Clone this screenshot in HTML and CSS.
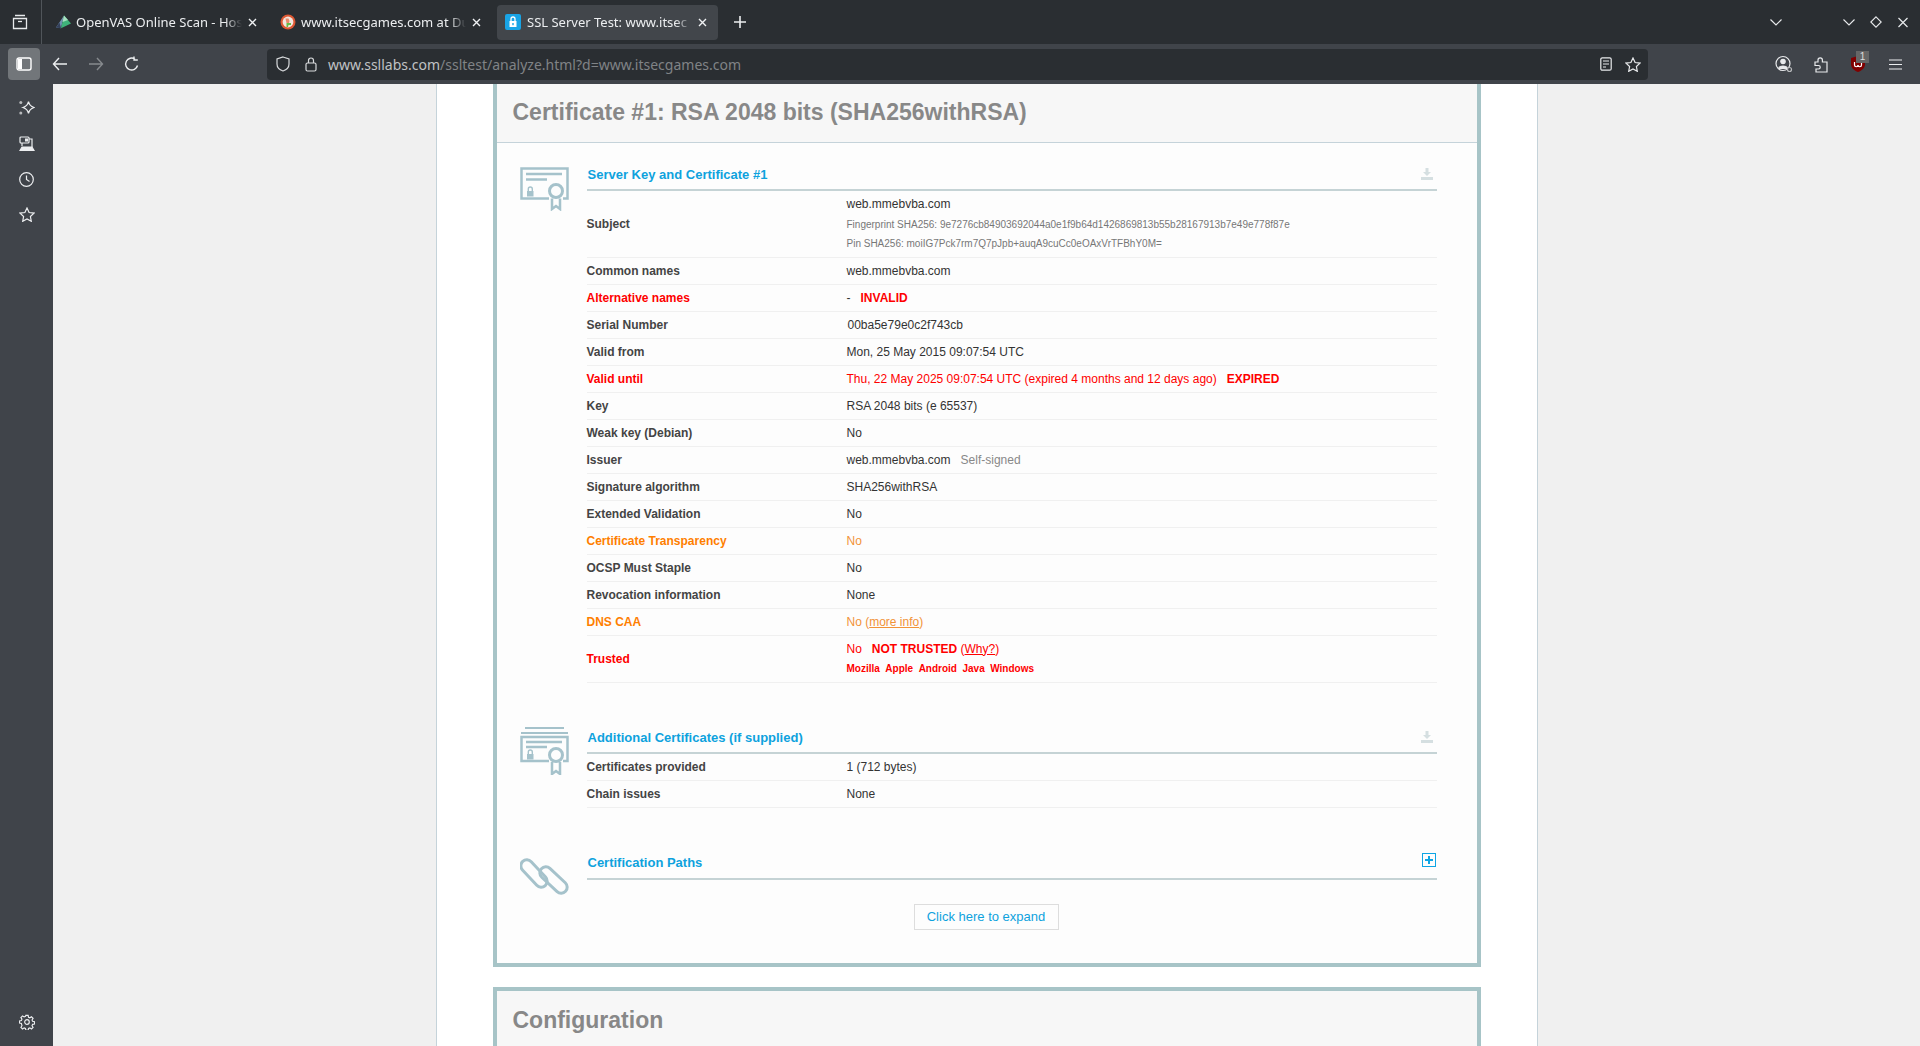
FILE: index.html
```html
<!DOCTYPE html>
<html lang="en">
<head>
    <meta charset="UTF-8">
    <title>SSL Server Test: www.itsecgames.com</title>
    <link rel="stylesheet" href="styles.css">
</head>
<body>
<div class="window">
    <!-- tabs -->
    <div class="tabbar">
        <div class="tabs-menu">
            <svg width="16" height="16" viewBox="0 0 16 16" fill="none" stroke="#e8eaec" stroke-width="1.3"><path d="M3 1.500h10M1.500 4.500h13v10h-13z"/><path d="M6 7.500h4"/></svg>
        </div>
        <div class="tab">
            <svg class="favicon" width="16" height="16" viewBox="0 0 16 16"><path d="M9 1.500 1 13.500l5 .8z" fill="#6f8fb0"/><path d="M9 1.500 6 14.300 16 9.500z" fill="#3fb37a"/><path d="M9 1.500 7.500 8 13 6z" fill="#a8e0c0"/><path d="M1 13.500 4.500 8.500 6 14.300z" fill="#34405a"/></svg>
            <span class="tab-title">OpenVAS Online Scan - Hos</span>
            <svg class="tab-close" width="9" height="9" viewBox="0 0 9 9" stroke="#f0f2f4" stroke-width="1.400"><path d="M1 1l7 7M8 1 1 8"/></svg>
        </div>
        <div class="tab tab-second">
            <svg class="favicon" width="16" height="16" viewBox="0 0 16 16"><circle cx="8" cy="8" r="7.500" fill="#de5833"/><circle cx="8" cy="8" r="5.400" fill="#f3e6de"/><path d="M5.500 4.500h3l1 2.500-.5 2H6.500z" fill="#e98a6c"/><path d="M6.500 9H11v2H8.500l-.5 2H6.500z" fill="#65bc46"/></svg>
            <span class="tab-title">www.itsecgames.com at Du</span>
            <svg class="tab-close" width="9" height="9" viewBox="0 0 9 9" stroke="#f0f2f4" stroke-width="1.400"><path d="M1 1l7 7M8 1 1 8"/></svg>
        </div>
        <div class="tab active">
            <svg class="favicon" width="16" height="16" viewBox="0 0 16 16"><rect width="16" height="16" rx="2" fill="#18a4e6"/><path d="M4.500 7h7v6h-7z" fill="#fff"/><path d="M6 7V5a2 2 0 0 1 4 0v2" fill="none" stroke="#fff" stroke-width="1.300"/><rect x="7.300" y="9" width="1.400" height="2.200" fill="#18a4e6"/></svg>
            <span class="tab-title">SSL Server Test: www.itsec</span>
            <svg class="tab-close" width="9" height="9" viewBox="0 0 9 9" stroke="#f0f2f4" stroke-width="1.400"><path d="M1 1l7 7M8 1 1 8"/></svg>
        </div>
        <svg class="new-tab" width="14" height="14" viewBox="0 0 14 14" stroke="#eceef0" stroke-width="1.600"><path d="M7 1v12M1 7h12"/></svg>
        <div class="tabbar-right">
            <svg class="tab-list" width="12" height="7" viewBox="0 0 12 7" fill="none" stroke="#e8eaec" stroke-width="1.200"><path d="M.5.500 6 6 11.500.500"/></svg>
            <div class="win-controls">
                <svg width="12" height="7" viewBox="0 0 12 7" fill="none" stroke="#e8eaec" stroke-width="1.100"><path d="M.5.500 6 6 11.500.500"/></svg>
                <svg width="12" height="12" viewBox="0 0 12 12" fill="none" stroke="#e8eaec" stroke-width="1.100"><path d="M6 .800 11.200 6 6 11.200.800 6z"/></svg>
                <svg width="12" height="11" viewBox="0 0 12 11" fill="none" stroke="#e8eaec" stroke-width="1.200"><path d="M1.500 1l9 9M10.500 1l-9 9"/></svg>
            </div>
        </div>
    </div>

    <!-- toolbar -->
    <div class="toolbar">
        <div class="sidebar-btn">
            <svg width="16" height="14" viewBox="0 0 16 14" fill="none" stroke="#fff" stroke-width="1.400"><rect x="1" y="1" width="14" height="12" rx="2"/><rect x="2" y="2" width="4" height="10" fill="#fff" stroke="none"/></svg>
        </div>
        <svg class="nav-btn" width="16" height="14" viewBox="0 0 16 14" fill="none" stroke="#eceef0" stroke-width="1.400"><path d="M7 1 1.500 7 7 13M2 7h13"/></svg>
        <svg class="nav-btn" width="16" height="14" viewBox="0 0 16 14" fill="none" stroke="#868a8e" stroke-width="1.400"><path d="M9 1l5.500 6L9 13M14 7H1"/></svg>
        <svg class="nav-btn" width="16" height="16" viewBox="0 0 16 16" fill="none" stroke="#eceef0" stroke-width="1.400"><path d="M13.500 9.500A6 6 0 1 1 11 3M10 .500V4h3.800"/></svg>
        <div class="urlbar">
            <svg class="url-icon" width="14" height="16" viewBox="0 0 14 16" fill="none" stroke="#d8dadc" stroke-width="1.200"><path d="M7 1l6 2v5c0 3.500-3 6-6 7-3-1-6-3.500-6-7V3z"/></svg>
            <svg class="url-icon lock" width="12" height="15" viewBox="0 0 12 15" fill="none" stroke="#d8dadc" stroke-width="1.200"><rect x="1" y="6" width="10" height="8" rx="1.500"/><path d="M3.500 6V3.500a2.500 2.500 0 0 1 5 0V6"/></svg>
            <span class="url-text"><span class="url-host">www.ssllabs.com</span>/ssltest/analyze.html?d=www.itsecgames.com</span>
            <div class="url-right">
                <svg width="12" height="14" viewBox="0 0 12 14" fill="none" stroke="#e8eaec" stroke-width="1.200"><rect x=".8" y=".8" width="10.400" height="12.400" rx="1.500"/><path d="M3 4h6M3 7h6M3 10h3"/></svg>
                <svg width="16" height="15" viewBox="0 0 16 15" fill="none" stroke="#e8eaec" stroke-width="1.200"><path d="M8 1l2.100 4.500 4.900.6-3.600 3.400.9 4.800L8 11.900l-4.300 2.400.9-4.800L1 6.100l4.900-.6z"/></svg>
            </div>
        </div>
        <div class="toolbar-right">
            <div class="tool-slot">
                <svg width="18" height="18" viewBox="0 0 18 18" fill="none" stroke="#e8eaec" stroke-width="1.200"><circle cx="8" cy="8.500" r="7"/><circle cx="8" cy="6.500" r="2.200" fill="#e8eaec"/><path d="M4 12.500c1-2 7-2 8 0v1H4z" fill="#e8eaec"/><circle cx="14.500" cy="14.500" r="2" fill="#40444a" stroke="#b8babc"/></svg>
            </div>
            <div class="tool-slot">
                <svg width="14" height="18" viewBox="0 0 14 18" fill="none" stroke="#e8eaec" stroke-width="1.200"><path d="M1 7h3V5a2.200 2.200 0 0 1 4.400 0v2H13v10H2v-3h2.500a1.700 1.700 0 0 0 0-3.500H1z"/></svg>
            </div>
            <div class="tool-slot ublock">
                <svg width="14" height="16" viewBox="0 0 14 16"><path d="M0 2l7-2 7 2v6c0 4-3 6.500-7 8-4-1.500-7-4-7-8z" fill="#800000"/><path d="M3.500 6v3a1.500 1.500 0 0 0 3.500 0 1.500 1.500 0 0 0 3.500 0V6" fill="none" stroke="#fff" stroke-width="1.200"/></svg>
                <span class="ublock-badge">1</span>
            </div>
            <div class="tool-slot">
                <svg width="13" height="11" viewBox="0 0 13 11" stroke="#eceef0" stroke-width="1.200"><path d="M0 1h13M0 5.500h13M0 10h13"/></svg>
            </div>
        </div>
    </div>

    <div class="main">
        <!-- sidebar -->
        <div class="sidebar">
            <div class="sidebar-top">
                <svg width="16" height="16" viewBox="0 0 16 16" fill="none" stroke="#eceef0" stroke-width="1.300"><path d="M9.500 1.500c.6 3.300 2 4.800 5.500 6-3.500 1.200-4.900 2.700-5.500 6-.6-3.300-2-4.800-5.500-6 3.500-1.200 4.900-2.700 5.500-6z"/><circle cx="1.800" cy="2.500" r="1.500" fill="#b8babc" stroke="none"/><circle cx="1.800" cy="13" r="1.500" fill="#b8babc" stroke="none"/></svg>
                <svg width="16" height="16" viewBox="0 0 16 16" fill="none" stroke="#eceef0" stroke-width="1.200"><rect x="1" y="1" width="9" height="6" rx="1"/><rect x="6" y="2.500" width="3" height="3" fill="#eceef0" stroke="none"/><path d="M10 3h3v5M3 7v3M13 8v3"/><path d="M1 14.500 3 11h10l2 3.500z" fill="#eceef0"/></svg>
                <svg width="15" height="15" viewBox="0 0 15 15" fill="none" stroke="#eceef0" stroke-width="1.200"><circle cx="7.500" cy="7.500" r="6.800"/><path d="M7.500 3.500v4l3 2"/></svg>
                <svg width="16" height="15" viewBox="0 0 16 15" fill="none" stroke="#eceef0" stroke-width="1.200"><path d="M8 1l2.100 4.500 4.900.6-3.600 3.400.9 4.800L8 11.900l-4.300 2.400.9-4.800L1 6.100l4.900-.6z"/></svg>
            </div>
            <svg width="16" height="16" viewBox="0 0 16 16" fill="none" stroke="#eceef0" stroke-width="1.200"><circle cx="8" cy="8" r="2.300"/><path d="M6.800 1h2.400l.4 2 1.400.6 1.700-1.100 1.700 1.700-1.100 1.700.6 1.400 2 .4v2.400l-2 .4-.6 1.400 1.100 1.700-1.700 1.700-1.700-1.100-1.400.6-.4 2H6.800l-.4-2-1.400-.6-1.700 1.100-1.700-1.700 1.100-1.700L2.100 9.600l-2-.4V6.800l2-.4.6-1.400L1.600 3.300l1.700-1.700L5 2.700l1.400-.6z" transform="translate(.4 .4) scale(.95)"/></svg>
        </div>

        <!-- page -->
        <div class="page">
            <div class="page-col">
                <div class="panel panel-first">
                    <div class="panel-header"><h2>Certificate #1: RSA 2048 bits (SHA256withRSA)</h2></div>

                    <div class="section section-first">
                        <svg class="section-icon" width="49" height="44" viewBox="0 0 49 44" fill="none" stroke="#a5c2cb" stroke-width="2.500">
                            <path d="M29 31.500H1.500V1.500h46v30H43"/>
                            <path d="M6 7h36M6 12.500h21" stroke-width="2.600"/>
                            <rect x="7" y="24" width="6.500" height="5.500" fill="#a5c2cb" stroke="none"/>
                            <path d="M8.300 24v-2a2 2 0 0 1 4 0v2" stroke-width="1.400"/>
                            <circle cx="36" cy="24" r="6.500" stroke-width="3"/>
                            <path d="M32 31.500v10.500l4-3 4 3V31.500"/>
                        </svg>
                        <div class="section-body">
                            <div class="section-title">
                                <h3>Server Key and Certificate #1</h3>
                                <svg class="download" width="12" height="12" viewBox="0 0 12 12" fill="#d5dfe1"><path d="M4.500 0h3v4H10L6 8 2 4h2.500zM0 9h12v3H0z"/></svg>
                            </div>
                            <table class="report">
                                <tr class="row-subject">
                                    <td class="label">Subject</td>
                                    <td>web.mmebvba.com<div class="small">Fingerprint SHA256: 9e7276cb84903692044a0e1f9b64d1426869813b55b28167913b7e49e778f87e</div><div class="small">Pin SHA256: moiIG7Pck7rm7Q7pJpb+auqA9cuCc0eOAxVrTFBhY0M=</div></td>
                                </tr>
                                <tr><td class="label">Common names</td><td>web.mmebvba.com</td></tr>
                                <tr class="bad"><td class="label">Alternative names</td><td><span class="dark">-</span> &nbsp; <b>INVALID</b></td></tr>
                                <tr><td class="label">Serial Number</td><td class="nudge">00ba5e79e0c2f743cb</td></tr>
                                <tr><td class="label">Valid from</td><td>Mon, 25 May 2015 09:07:54 UTC</td></tr>
                                <tr class="bad"><td class="label">Valid until</td><td>Thu, 22 May 2025 09:07:54 UTC (expired 4 months and 12 days ago) &nbsp; <b>EXPIRED</b></td></tr>
                                <tr><td class="label">Key</td><td>RSA 2048 bits (e 65537)</td></tr>
                                <tr><td class="label">Weak key (Debian)</td><td>No</td></tr>
                                <tr><td class="label">Issuer</td><td>web.mmebvba.com &nbsp; <span class="grey">Self-signed</span></td></tr>
                                <tr><td class="label">Signature algorithm</td><td>SHA256withRSA</td></tr>
                                <tr><td class="label">Extended Validation</td><td>No</td></tr>
                                <tr class="warn"><td class="label">Certificate Transparency</td><td>No</td></tr>
                                <tr><td class="label">OCSP Must Staple</td><td>No</td></tr>
                                <tr><td class="label">Revocation information</td><td>None</td></tr>
                                <tr class="warn"><td class="label">DNS CAA</td><td>No (<a href="#">more info</a>)</td></tr>
                                <tr class="bad row-trusted">
                                    <td class="label">Trusted</td>
                                    <td>No &nbsp; <b>NOT TRUSTED</b> (<a href="#">Why?</a>)<div class="stores"><b>Mozilla</b><b>Apple</b><b>Android</b><b>Java</b><b>Windows</b></div></td>
                                </tr>
                            </table>
                        </div>
                    </div>

                    <div class="section">
                        <svg class="section-icon icon-stack" width="49" height="48" viewBox="0 0 49 48" fill="none" stroke="#a5c2cb" stroke-width="2.500">
                            <path d="M5 1h39M1 6h47" stroke-width="2"/>
                            <path d="M29 34H1.500V10h46v24H43"/>
                            <path d="M6 15h36M6 20h21" stroke-width="2.400"/>
                            <rect x="7" y="27" width="6.500" height="5.500" fill="#a5c2cb" stroke="none"/>
                            <path d="M8.300 27v-2a2 2 0 0 1 4 0v2" stroke-width="1.400"/>
                            <circle cx="36" cy="28" r="6.500" stroke-width="3"/>
                            <path d="M32 35v12l4-3 4 3V35"/>
                        </svg>
                        <div class="section-body">
                            <div class="section-title">
                                <h3>Additional Certificates (if supplied)</h3>
                                <svg class="download" width="12" height="12" viewBox="0 0 12 12" fill="#d5dfe1"><path d="M4.500 0h3v4H10L6 8 2 4h2.500zM0 9h12v3H0z"/></svg>
                            </div>
                            <table class="report">
                                <tr><td class="label">Certificates provided</td><td>1 (712 bytes)</td></tr>
                                <tr><td class="label">Chain issues</td><td>None</td></tr>
                            </table>
                        </div>
                    </div>

                    <div class="section section-paths">
                        <svg class="section-icon icon-chain" width="49" height="40" viewBox="0 0 49 40" fill="none" stroke="#a5c2cb" stroke-width="3">
                            <rect x="-2.500" y="9.500" width="33" height="12" rx="6" transform="rotate(47 14 15.500)"/>
                            <rect x="17" y="16" width="33" height="12" rx="6" transform="rotate(43 33.500 22)"/>
                        </svg>
                        <div class="section-body">
                            <div class="section-title">
                                <h3>Certification Paths</h3>
                                <span class="expand"></span>
                            </div>
                            <div class="expand-row"><a class="expand-btn" href="#">Click here to expand</a></div>
                        </div>
                    </div>
                </div>

                <div class="panel">
                    <div class="panel-header"><h2>Configuration</h2></div>
                </div>
            </div>
        </div>
    </div>
</div>
</body>
</html>
```

FILE: styles.css
```css
html, body {
    margin: 0;
    height: 100%;
    overflow: hidden;
}

body {
    font-family: "Liberation Sans", Arial, sans-serif;
    font-size: 12px;
    color: #333;
}

.window {
    display: flex;
    flex-direction: column;
    height: 1046px;
}

/* tabs */
.tabbar {
    display: flex;
    align-items: center;
    height: 44px;
    flex: none;
    background-color: #2a2e32;
    font-family: "Noto Sans", sans-serif;
    font-size: 13px;
    color: #eceef0;
}

.tabs-menu {
    width: 42px;
    height: 44px;
    padding-right: 2px;
    display: flex;
    align-items: center;
    justify-content: center;
    box-sizing: border-box;
    border-right: 1px solid #50555a;
    margin-right: 7px;
}

.tab {
    width: 221px;
    height: 35px;
    margin-right: 3px;
    padding: 0 13px 0 6px;
    box-sizing: border-box;
    display: flex;
    align-items: center;
    border-radius: 4px;
}

.tab-second {
    padding-left: 7px;
}

.tab.active {
    padding: 0 11px 0 8px;
    background-color: #42464b;
}

.favicon {
    flex: none;
    margin-right: 5px;
}

.tab.active .favicon {
    margin-right: 6px;
}

.tab-title {
    flex: 1;
    min-width: 0;
    white-space: nowrap;
    overflow: hidden;
    -webkit-mask-image: linear-gradient(to right, #000 90%, transparent);
    mask-image: linear-gradient(to right, #000 90%, transparent);
}

.tab-close {
    flex: none;
    margin-left: 6px;
}

.new-tab {
    margin-left: 12px;
}

.tabbar-right {
    margin-left: auto;
    display: flex;
    align-items: center;
}

.tab-list {
    margin-right: 61px;
}

.win-controls {
    display: flex;
    align-items: center;
    gap: 15px;
    margin-right: 11px;
}

/* toolbar */
.toolbar {
    display: flex;
    align-items: center;
    height: 40px;
    flex: none;
    padding-left: 8px;
    box-sizing: border-box;
    background-color: #40444a;
}

.sidebar-btn {
    width: 32px;
    height: 32px;
    display: flex;
    align-items: center;
    justify-content: center;
    border-radius: 4px;
    background-color: #72767a;
    margin-right: 12px;
}

.nav-btn {
    margin-right: 20px;
}

.urlbar {
    width: 1381px;
    height: 31px;
    margin-left: 107px;
    box-sizing: border-box;
    padding: 0 7px 0 9px;
    display: flex;
    align-items: center;
    border-radius: 4px;
    background-color: #2a2e32;
    font-family: "Noto Sans", sans-serif;
    font-size: 14px;
    color: #808386;
}

.url-icon {
    margin-right: 15px;
}

.url-icon.lock {
    margin-right: 11px;
}

.url-host {
    color: #c0c2c4;
}

.url-right {
    margin-left: auto;
    display: flex;
    align-items: center;
    gap: 13px;
}

.toolbar-right {
    margin-left: auto;
    margin-right: 17px;
    display: flex;
    align-items: center;
    gap: 21px;
}

.tool-slot {
    width: 16px;
    display: flex;
    justify-content: center;
}

.tool-slot svg {
    flex: none;
}

.ublock {
    position: relative;
}

.ublock-badge {
    position: absolute;
    left: 6px;
    top: -5px;
    width: 13px;
    height: 12px;
    line-height: 12px;
    text-align: center;
    font-size: 10px;
    color: #ddd;
    background-color: #666;
}

.main {
    display: flex;
    flex: 1;
    min-height: 0;
}

/* sidebar */
.sidebar {
    width: 53px;
    flex: none;
    display: flex;
    flex-direction: column;
    align-items: center;
    justify-content: space-between;
    padding: 16px 0 16px;
    box-sizing: border-box;
    background-color: #40444a;
}

.sidebar-top {
    display: flex;
    flex-direction: column;
    align-items: center;
    gap: 20px;
}

/* page */
.page {
    flex: 1;
    min-width: 0;
    overflow: hidden;
    background-color: #f0f0f0;
}

.page-col {
    width: 1102px;
    height: 100%;
    margin: 0 auto;
    box-sizing: border-box;
    padding: 0 56px;
    background-color: #fff;
    border-left: 1px solid #c5d3da;
    border-right: 1px solid #c5d3da;
}

.panel {
    border: 4px solid #a7c4c7;
    background-color: #fdfdfd;
    margin-bottom: 20px;
}

.panel-first {
    border-top: none;
    padding-bottom: 33px;
}

.panel-header {
    padding: 0 16px;
    height: 59px;
    box-sizing: border-box;
    display: flex;
    align-items: center;
    background-color: #f7f7f7;
    border-bottom: 1px solid #c5d3da;
}

.panel-first .panel-header {
    padding-bottom: 1px;
}

.panel-header h2 {
    margin: 0;
    font-size: 23px;
    font-weight: bold;
    color: #888;
}

.section {
    display: flex;
    margin-top: 42px;
    padding: 0 40px 0 23px;
}

.section-first {
    margin-top: 18px;
    margin-bottom: -1px;
}

.section-icon {
    flex: none;
    margin: 6px 18px 0 0;
}

.icon-stack {
    margin-top: 3px;
}

.icon-chain {
    margin-top: 8px;
}

.section-body {
    flex: 1;
    min-width: 0;
}

.section-title {
    height: 30px;
    box-sizing: border-box;
    padding: 0 1px 2px;
    display: flex;
    align-items: center;
    justify-content: space-between;
    border-bottom: 2px solid #c5d3d5;
}

.section-paths .section-title {
    padding-bottom: 4px;
}

.section-title h3 {
    margin: 0;
    font-size: 13px;
    font-weight: bold;
    color: #0ea2dd;
}

.download {
    margin-right: 3px;
}

.expand {
    position: relative;
    width: 14px;
    height: 14px;
    margin-top: -4px;
    box-sizing: border-box;
    border: 1px solid #0ea5e4;
}

.expand::before,
.expand::after {
    content: "";
    position: absolute;
    background-color: #0ea5e4;
}

.expand::before {
    left: 2px;
    right: 2px;
    top: 5px;
    height: 2px;
}

.expand::after {
    top: 2px;
    bottom: 2px;
    left: 5px;
    width: 2px;
}

.report {
    width: 100%;
    border-collapse: separate;
    border-spacing: 0;
    table-layout: fixed;
}

.report td {
    height: 27px;
    box-sizing: border-box;
    padding: 0 0 1px;
    border-bottom: 1px solid #f0f0f0;
}

.report .label {
    width: 260px;
    font-weight: bold;
    color: #444;
}

.report .nudge {
    padding-left: 1px;
}

.report .row-subject td {
    height: 67px;
}

.report .row-subject td:last-child {
    padding-bottom: 2px;
}

.report .row-trusted td {
    height: 47px;
}

.report .row-trusted td:last-child {
    padding-bottom: 3px;
}

.small {
    font-size: 10px;
    color: #777;
    margin-top: 8px;
}

.stores {
    font-size: 10px;
    margin-top: 7px;
    display: flex;
    gap: 5.500px;
}

.bad,
.bad .label {
    color: #f00;
}

.bad a {
    color: #f00;
}

.warn .label {
    color: #ff7f00;
}

.warn td:last-child {
    color: #f29339;
}

.warn a {
    color: #f29339;
}

.dark {
    color: #333;
}

.grey {
    color: #888;
}

.expand-row {
    margin-top: 24px;
    padding-right: 51px;
    display: flex;
    justify-content: center;
}

.expand-btn {
    width: 145px;
    height: 26px;
    box-sizing: border-box;
    text-align: center;
    line-height: 24px;
    font-size: 13px;
    color: #0ea2dd;
    text-decoration: none;
    border: 1px solid #ddd;
}
```
